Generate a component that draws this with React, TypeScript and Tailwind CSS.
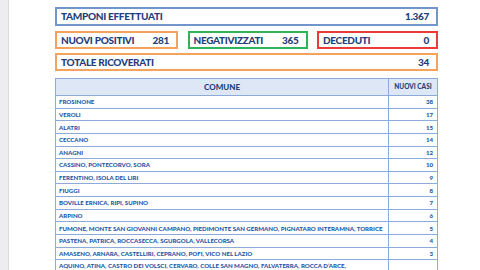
const rows: [string, number][] = [
  ['FROSINONE', 38],
  ['VEROLI', 17],
  ['ALATRI', 15],
  ['CECCANO', 14],
  ['ANAGNI', 12],
  ['CASSINO, PONTECORVO, SORA', 10],
  ['FERENTINO, ISOLA DEL LIRI', 9],
  ['FIUGGI', 8],
  ['BOVILLE ERNICA, RIPI, SUPINO', 7],
  ['ARPINO', 6],
  ['FUMONE, MONTE SAN GIOVANNI CAMPANO, PIEDIMONTE SAN GERMANO, PIGNATARO INTERAMNA, TORRICE', 5],
  ['PASTENA, PATRICA, ROCCASECCA, SGURGOLA, VALLECORSA', 4],
  ['AMASENO, ARNARA, CASTELLIRI, CEPRANO, POFI, VICO NEL LAZIO', 3],
]

function StatBox({ label, value, border, className = '' }: { label: string; value: string; border: string; className?: string }) {
  return (
    <div className={`flex items-center justify-between border-2 ${border} pl-[4px] pr-[7px] ${className}`}>
      <span>{label}</span>
      <span>{value}</span>
    </div>
  )
}

export default function App() {
  return (
    <div className="flex h-[270px] w-[480px] overflow-hidden bg-white font-['Lato',sans-serif] font-bold">
      <div className="w-[9px] shrink-0 border-r border-[#dcdce0] bg-[#ededf0]" />
      <div className="ml-[46px] flex w-[383px] flex-col pt-[7px] text-[10px] font-black tracking-[-0.3px] text-[#1f3f7c]">
        <StatBox label="TAMPONI EFFETTUATI" value="1.367" border="border-[#7296cc]" className="h-[19px]" />
        <div className="mt-[5px] flex h-[18px] justify-between">
          <StatBox label="NUOVI POSITIVI" value="281" border="border-[#f5a25c]" className="w-[123px]" />
          <StatBox label="NEGATIVIZZATI" value="365" border="border-[#2fb457]" className="w-[120px]" />
          <StatBox label="DECEDUTI" value="0" border="border-[#ea3a3a]" className="w-[121px]" />
        </div>
        <StatBox label="TOTALE RICOVERATI" value="34" border="border-[#f5a25c]" className="mt-[4px] h-[18px]" />

        <div className="mt-[7px] border border-[#8eaadb] text-[6.1px] tracking-normal text-[#2456a6]">
          <div className="flex h-[17px] border-b border-[#8eaadb] bg-[#dde7f5] text-[#1f3f7c]">
            <div className="flex flex-1 items-center justify-center border-r border-[#8eaadb] text-[8px]">COMUNE</div>
            <div className="flex w-[48px] items-center justify-center text-[6.5px]">NUOVI CASI</div>
          </div>
          {rows.map(([name, n]) => (
            <div key={name} className="flex h-[12.65px] border-b border-[#8eaadb]">
              <div className="flex flex-1 items-center whitespace-nowrap border-r border-[#8eaadb] pl-[3px]">{name}</div>
              <div className="flex w-[48px] items-center justify-end pr-[4px]">{n}</div>
            </div>
          ))}
          <div className="flex h-[12px]">
            <div className="flex-1 whitespace-nowrap border-r border-[#8eaadb] pl-[3px] pt-[2px] leading-[7px]">
              AQUINO, ATINA, CASTRO DEI VOLSCI, CERVARO, COLLE SAN MAGNO, FALVATERRA, ROCCA D’ARCE,
            </div>
            <div className="w-[48px]" />
          </div>
        </div>
      </div>
    </div>
  )
}
